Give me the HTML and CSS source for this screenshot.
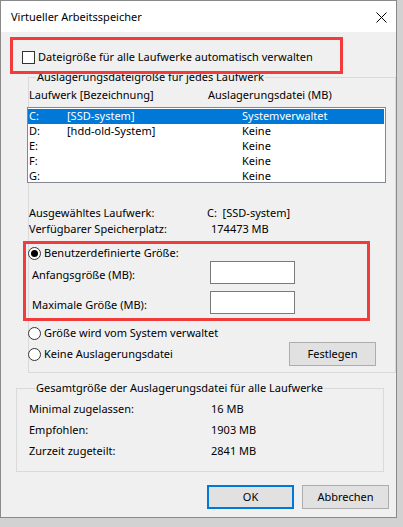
FILE: index.html
```html
<!DOCTYPE html>
<html lang="de">
<head>
<meta charset="utf-8">
<title>Virtueller Arbeitsspeicher</title>
<link rel="stylesheet" href="styles.css">
</head>
<body>
<div class="win">
  <div class="titlebar">
    <span class="title">Virtueller Arbeitsspeicher</span>
    <svg class="close" width="11" height="11" viewBox="0 0 11 11"><path d="M0.5 0.5 L10.5 10.5 M10.5 0.5 L0.5 10.5" stroke="#000" stroke-width="1" fill="none"/></svg>
  </div>
  <div class="content">
    <div class="check-row"><span class="checkbox"></span><span>Dateigröße für alle Laufwerke automatisch verwalten</span></div>

    <fieldset class="group drives">
      <legend>Auslagerungsdateigröße für jedes Laufwerk</legend>
      <div class="list-head"><span class="head-drive">Laufwerk [Bezeichnung]</span><span>Auslagerungsdatei (MB)</span></div>
      <div class="listbox">
        <div class="lrow sel"><span class="c1">C:</span><span class="c2">[SSD-system]</span><span>Systemverwaltet</span></div>
        <div class="lrow"><span class="c1">D:</span><span class="c2">[hdd-old-System]</span><span>Keine</span></div>
        <div class="lrow"><span class="c1">E:</span><span class="c2"></span><span>Keine</span></div>
        <div class="lrow"><span class="c1">F:</span><span class="c2"></span><span>Keine</span></div>
        <div class="lrow"><span class="c1">G:</span><span class="c2"></span><span>Keine</span></div>
      </div>
      <div class="info">
        <span>Ausgewähltes Laufwerk:</span><span class="pre">C:  [SSD-system]</span>
        <span>Verfügbarer Speicherplatz:</span><span class="val-shift">174473 MB</span>
      </div>
      <div class="radio-row first"><span class="radio on"></span><span>Benutzerdefinierte Größe:</span></div>
      <div class="size-row"><span class="size-label">Anfangsgröße (MB):</span><span class="textbox"></span></div>
      <div class="size-row second"><span class="size-label">Maximale Größe (MB):</span><span class="textbox"></span></div>
      <div class="radio-row sys"><span class="radio"></span><span>Größe wird vom System verwaltet</span></div>
      <div class="radio-row none"><span class="radio"></span><span>Keine Auslagerungsdatei</span><span class="btn set">Festlegen</span></div>
    </fieldset>

    <fieldset class="group totals">
      <legend>Gesamtgröße der Auslagerungsdatei für alle Laufwerke</legend>
      <div class="trow"><span class="tlabel">Minimal zugelassen:</span><span>16 MB</span></div>
      <div class="trow"><span class="tlabel">Empfohlen:</span><span>1903 MB</span></div>
      <div class="trow"><span class="tlabel">Zurzeit zugeteilt:</span><span>2841 MB</span></div>
    </fieldset>

    <div class="buttons"><span class="btn default">OK</span><span class="btn">Abbrechen</span></div>
  </div>
  <div class="mark mark-auto"></div>
  <div class="mark mark-custom"></div>
</div>
</body>
</html>
```
FILE: styles.css
```css
* { box-sizing: border-box; }
html, body { margin: 0; padding: 0; }
body {
  background: #d2d2d2;
  font: 11px/16px "Noto Sans", "Open Sans", sans-serif;
  color: #000;
  width: 403px;
  height: 527px;
  overflow: hidden;
}
.win {
  position: relative;
  width: 397px;
  height: 518px;
  border: 1px solid #8a8a8a;
  background: #f0f0f0;
}
.titlebar {
  height: 31px;
  background: #fff;
  display: flex;
  align-items: center;
  justify-content: space-between;
  padding: 0 9px 0 10px;
}
.title { line-height: 16px; margin-top: 1px; }
.close { display: block; margin-top: 1px; }

.check-row {
  display: flex;
  align-items: center;
  margin: 17px 0 0 21px;
  height: 16px;
}
.checkbox {
  width: 13px;
  height: 13px;
  border: 1px solid #333;
  background: #fff;
  margin-right: 3px;
}

.group {
  margin: 0;
  padding: 0;
  min-width: 0;
  border: 1px solid #dadada;
}
.group legend {
  padding: 0 1px;
  line-height: 16px;
}
.drives {
  margin: 4px 0 0 27px;
  width: 368px;
  padding-bottom: 6px;
}
.drives legend { margin-left: 7px; }

.list-head {
  display: flex;
  margin-top: 2px;
  height: 16px;
}
.head-drive { width: 179px; }

.listbox {
  margin: 4px 0 0 -2px;
  width: 359px;
  height: 76px;
  border: 1px solid #828790;
  background: #fff;
  padding: 1px 1px 0 0;
  overflow: hidden;
}
.lrow {
  display: flex;
  height: 15px;
  line-height: 14px;
  padding-left: 1px;
}
.lrow.sel { background: #0078d7; color: #fff; }
.c1 { width: 38px; }
.c2 { width: 175px; }

.info {
  display: grid;
  grid-template-columns: 178px auto;
  margin-top: 22px;
}
.pre { white-space: pre; }
.val-shift { padding-left: 4px; }

.radio-row {
  display: flex;
  align-items: center;
  height: 16px;
  margin-left: -1px;
}
.radio-row.first { margin-top: 8px; }
.radio-row.sys { margin-top: 11px; }
.radio-row.none { height: 24px; margin-top: 1px; }
.radio {
  position: relative;
  width: 13px;
  height: 13px;
  border: 1px solid #333;
  border-radius: 50%;
  background: #fff;
  margin-right: 3px;
  flex: none;
}
.radio.on::after {
  content: "";
  position: absolute;
  left: 2px;
  top: 2px;
  width: 7px;
  height: 7px;
  border-radius: 50%;
  background: #000;
}

.size-row {
  display: flex;
  align-items: flex-start;
  margin: 0 0 0 3px;
}
.size-row.second { margin-top: 7px; }
.size-label { width: 178px; margin-top: 6px; }
.textbox {
  width: 85px;
  height: 23px;
  border: 1px solid #7a7a7a;
  background: #fff;
}

.btn {
  display: flex;
  align-items: center;
  justify-content: center;
  width: 87px;
  height: 24px;
  background: #e1e1e1;
  border: 1px solid #adadad;
}
.btn.set { margin: 0 19px 0 auto; }
.btn.default { border: 2px solid #0078d7; }

.totals {
  margin: 7px 0 0 15px;
  width: 368px;
  padding: 5px 0 12px 12px;
}
.totals legend { margin-left: 6px; }
.trow { display: flex; height: 16px; }
.trow + .trow { margin-top: 5px; }
.tlabel { width: 182px; }

.buttons {
  display: flex;
  justify-content: flex-end;
  gap: 8px;
  margin: 13px 7px 0 0;
}

.mark {
  position: absolute;
  border: 3px solid #f23b3b;
  pointer-events: none;
}
.mark-auto { left: 9px; top: 36px; width: 333px; height: 37px; }
.mark-custom { left: 22px; top: 240px; width: 347px; height: 80px; }
```
